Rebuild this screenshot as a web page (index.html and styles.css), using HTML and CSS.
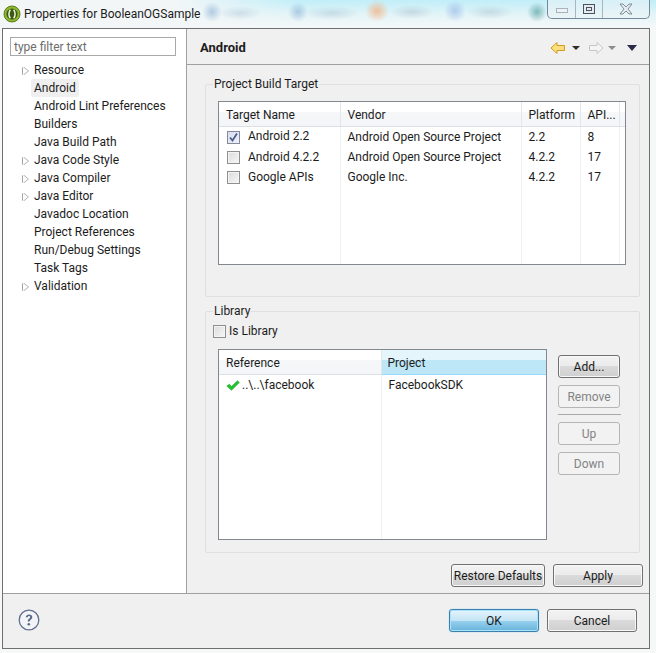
FILE: index.html
```html
<!DOCTYPE html>
<html lang="en">
<head>
  <meta charset="UTF-8" />
  <title>Properties for BooleanOGSample</title>
  <link rel="stylesheet" href="styles.css">
</head>
<body>
  <div class="titlebar">
    <svg class="app-icon" width="18" height="18" viewBox="0 0 18 18">
      <circle cx="9" cy="9" r="8" fill="#8fb92c" stroke="#5d7a1c"/>
      <circle cx="9" cy="9" r="5.6" fill="#3c5a17"/>
      <path d="M7.400 4.800C5.400 7 5.400 11 7.400 13.200M10.600 4.800C12.600 7 12.600 11 10.600 13.200" fill="none" stroke="#f2f7d8" stroke-width="1.500"/>
    </svg>
    <span class="title-text">Properties for BooleanOGSample</span>
    <div class="win-controls">
      <div class="win-btn win-min"><span class="min-glyph"></span></div>
      <div class="win-btn win-max"><span class="max-glyph"></span></div>
      <div class="win-btn win-close">
        <svg width="14" height="12" viewBox="0 0 14 12"><path d="M1 1h3l3 3 3-3h3L9 6l4 5h-3L7 8l-3 3H1l4-5z" fill="#e6ebef" stroke="#6a7680" stroke-width=".8"/></svg>
      </div>
    </div>
  </div>

  <div class="window">
    <div class="main">
      <div class="sidebar">
        <input class="filter" type="text" placeholder="type filter text">
        <ul class="tree">
          <li class="has-kids">Resource</li>
          <li><span class="selected">Android</span></li>
          <li>Android Lint Preferences</li>
          <li>Builders</li>
          <li>Java Build Path</li>
          <li class="has-kids">Java Code Style</li>
          <li class="has-kids">Java Compiler</li>
          <li class="has-kids">Java Editor</li>
          <li>Javadoc Location</li>
          <li>Project References</li>
          <li>Run/Debug Settings</li>
          <li>Task Tags</li>
          <li class="has-kids">Validation</li>
        </ul>
      </div>

      <div class="content">
        <div class="page-head">
          <h1>Android</h1>
          <div class="nav-icons">
            <svg width="16" height="14" viewBox="0 0 16 14"><path d="M1 7l6-5.500v3h7.500v5H7v3z" fill="#fbdf7f" stroke="#d49a1c"/></svg>
            <span class="drop drop-dark"></span>
            <svg class="nav-fwd" width="16" height="14" viewBox="0 0 16 14"><path d="M15 7L9 1.500v3H1.500v5H9v3z" fill="#f4f4f4" stroke="#c6c6c6"/></svg>
            <span class="drop drop-grey"></span>
            <span class="drop drop-menu"></span>
          </div>
        </div>

        <fieldset class="group group-target">
          <legend>Project Build Target</legend>
          <div class="table-box target-box">
            <table class="grid">
              <colgroup><col class="c-name"><col class="c-vendor"><col class="c-platform"><col class="c-api"><col></colgroup>
              <thead>
                <tr><th>Target Name</th><th>Vendor</th><th>Platform</th><th>API...</th><th></th></tr>
              </thead>
              <tbody>
                <tr><td><span class="check checked"><svg width="11" height="11" viewBox="0 0 11 11"><path d="M2 5.500l2.500 3L9 1.500" fill="none" stroke="#4a5f8c" stroke-width="1.800"/></svg></span>Android 2.2</td><td>Android Open Source Project</td><td>2.2</td><td>8</td><td></td></tr>
                <tr><td><span class="check"></span>Android 4.2.2</td><td>Android Open Source Project</td><td>4.2.2</td><td>17</td><td></td></tr>
                <tr><td><span class="check"></span>Google APIs</td><td>Google Inc.</td><td>4.2.2</td><td>17</td><td></td></tr>
                <tr class="filler"><td></td><td></td><td></td><td></td><td></td></tr>
              </tbody>
            </table>
          </div>
        </fieldset>

        <fieldset class="group group-library">
          <legend>Library</legend>
          <label class="is-library"><span class="check"></span>Is Library</label>
          <div class="library-row">
            <div class="table-box ref-box">
              <table class="grid">
                <colgroup><col class="c-ref"><col></colgroup>
                <thead>
                  <tr><th>Reference</th><th class="sorted">Project</th></tr>
                </thead>
                <tbody>
                  <tr><td><svg class="ok-mark" width="14" height="11" viewBox="0 0 14 11"><path d="M.8 6l2.700-1.800L5.500 6.500 11.500.8 13.300 2.500 5.500 10.300z" fill="#22c52e" stroke="#14a820" stroke-width=".6"/></svg>..\..\facebook</td><td>FacebookSDK</td></tr>
                  <tr class="filler"><td></td><td></td></tr>
                </tbody>
              </table>
            </div>
            <div class="side-buttons">
              <button class="btn">Add...</button>
              <button class="btn" disabled>Remove</button>
              <div class="side-sep"></div>
              <button class="btn" disabled>Up</button>
              <button class="btn" disabled>Down</button>
            </div>
          </div>
        </fieldset>

        <div class="page-actions">
          <button class="btn btn-restore">Restore Defaults</button>
          <button class="btn btn-apply">Apply</button>
        </div>
      </div>
    </div>

    <div class="footer">
      <svg class="help" width="22" height="22" viewBox="0 0 22 22">
        <circle cx="11" cy="11" r="9.800" fill="#f2f4f8" stroke="#5f6f8e" stroke-width="1.300"/>
        <path d="M7.800 8.300C8 6.400 9.400 5.600 11.100 5.600c1.900 0 3.200 1 3.200 2.600 0 2.300-2.600 2.300-2.600 4.200H9.800c0-2.700 2.300-2.800 2.300-4.200 0-.7-.4-1.100-1.100-1.100-.8 0-1.100.5-1.200 1.200z" fill="#5a6a88"/>
        <circle cx="10.800" cy="15.200" r="1.300" fill="#5a6a88"/>
      </svg>
      <div class="footer-buttons">
        <button class="btn btn-dialog btn-ok">OK</button>
        <button class="btn btn-dialog">Cancel</button>
      </div>
    </div>
  </div>
</body>
</html>
```

FILE: styles.css
```css
* { box-sizing: border-box; }
body {
  margin: 0;
  width: 656px;
  height: 653px;
  overflow: hidden;
  background: #f6f8f8;
  font-family: Roboto, "Liberation Sans", sans-serif;
  font-size: 12px;
  color: #1c1c1c;
}

/* title bar, with the blurred desktop showing through */
.titlebar {
  height: 28px;
  padding-left: 3px;
  display: flex;
  align-items: center;
  background:
    radial-gradient(ellipse 10px 10px at 212px 12px, rgba(120,160,205,.5), transparent),
    radial-gradient(ellipse 22px 7px at 240px 13px, rgba(170,195,215,.45), transparent),
    radial-gradient(ellipse 10px 10px at 298px 12px, rgba(120,160,205,.5), transparent),
    radial-gradient(ellipse 28px 7px at 332px 13px, rgba(170,195,215,.5), transparent),
    radial-gradient(ellipse 12px 11px at 377px 11px, rgba(245,175,125,.75), transparent),
    radial-gradient(ellipse 22px 7px at 412px 12px, rgba(170,190,205,.5), transparent),
    radial-gradient(ellipse 11px 11px at 455px 11px, rgba(140,170,225,.55), transparent),
    radial-gradient(ellipse 24px 7px at 490px 12px, rgba(170,195,210,.5), transparent),
    radial-gradient(ellipse 10px 10px at 537px 12px, rgba(95,165,165,.75), transparent),
    linear-gradient(to right, #f3f6f7 0, #f3f6f7 170px, rgba(243,246,247,0) 300px),
    linear-gradient(to bottom, #c0eef9 0, #e2f4f7 50%, #f6f8f8 100%);
  position: relative;
}
.app-icon { margin-right: 3px; }
.win-controls {
  position: absolute;
  top: 0;
  left: 547px;
  width: 103px;
  height: 19px;
  display: flex;
  border: 1px solid #76899a;
  border-top: none;
  border-radius: 0 0 5px 5px;
  background: rgba(235,242,246,.55);
}
.win-btn {
  display: flex;
  align-items: center;
  justify-content: center;
  border-right: 1px solid #a9b6c0;
}
.win-min { width: 28px; }
.win-max { width: 27px; }
.win-close { flex: 1; border-right: none; }
.min-glyph {
  width: 12px;
  height: 5px;
  margin-top: 3px;
  border: 1px solid #a8b4bd;
  background: #eef2f4;
}
.max-glyph {
  width: 12px;
  height: 10px;
  border: 1px solid #4a5560;
  background: #e6eaed;
  box-shadow: inset 0 0 0 2px #e6eaed, inset 0 0 0 3px #4a5560;
}

.window {
  width: 648px;
  height: 621px;
  margin-left: 2px;
  border: 1px solid #6f6f6f;
  background: #f0f0f0;
  display: flex;
  flex-direction: column;
}
.main {
  height: 564px;
  display: flex;
}

/* left tree */
.sidebar {
  width: 184px;
  background: #fff;
  border-right: 1px solid #a0a0a0;
  padding: 8px 0 0 7px;
}
.filter {
  display: block;
  width: 166px;
  height: 19px;
  padding: 0 3px;
  border: 1px solid #a9a9a9;
  font: inherit;
  color: #333;
}
.filter::placeholder { color: #6d6d6d; }
.tree {
  list-style: none;
  margin: 5px 0 0;
  padding: 0 0 0 24px;
}
.tree li {
  height: 18px;
  line-height: 18px;
  white-space: nowrap;
  position: relative;
}
.has-kids::before {
  content: "";
  position: absolute;
  left: -11px;
  top: 6px;
  border-left: 5px solid #fff;
  border-top: 4px solid transparent;
  border-bottom: 4px solid transparent;
  filter: drop-shadow(-1px 0 0 #a3a3a3) drop-shadow(1px 0 0 #a3a3a3);
}
.selected {
  display: inline-block;
  margin-left: -3px;
  padding: 0 3px;
  background: #efefef;
  border-radius: 2px;
}

/* right page */
.content {
  flex: 1;
  min-width: 0;
}
.page-head {
  height: 36px;
  border-bottom: 1px solid #a0a0a0;
  padding: 2px 12px 0 13px;
  display: flex;
  align-items: center;
  justify-content: space-between;
}
.page-head h1 {
  margin: 0;
  font-size: 13px;
  font-weight: 700;
}
.nav-icons {
  display: flex;
  align-items: center;
}
.drop {
  width: 0;
  height: 0;
  margin-left: 6px;
  border-left: 4px solid transparent;
  border-right: 4px solid transparent;
  border-top: 4px solid #2d2d2d;
}
.nav-fwd { margin-left: 8px; }
.drop-grey {
  margin-left: 4px;
  border-top-color: #8a8a8a;
}
.drop-menu {
  margin-left: 11px;
  border-left-width: 5px;
  border-right-width: 5px;
  border-top: 6px solid #2c2c4a;
}

.group {
  margin: 0 9px 0 18px;
  padding: 0 12px 0 12px;
  border: 1px solid #dfdfdf;
  border-radius: 2px;
  min-width: 0;
}
.group legend {
  padding: 0 1px;
  margin-left: -5px;
  line-height: 15px;
}
.group-target {
  margin-top: 12px;
  height: 220px;
  padding-top: 9px;
}
.group-library {
  margin-top: 7px;
  height: 249px;
}
.target-box {
  height: 164px;
  margin-right: 1px;
}

.table-box {
  border: 1px solid #828790;
  background: #fff;
}
.grid {
  width: 100%;
  height: 100%;
  table-layout: fixed;
  border-collapse: collapse;
}
.grid th {
  height: 24px;
  padding: 3px 0 0 7px;
  font-weight: 400;
  text-align: left;
  border-right: 1px solid #e4e6e8;
  border-bottom: 1px solid #dcdfe3;
  background: linear-gradient(to bottom, #fff 0, #fff 40%, #f5f7f9 41%, #f3f5f7 100%);
}
.grid th:last-child { border-right: none; }
.grid th.sorted {
  padding-left: 6px;
  background: linear-gradient(to bottom, #e4f5fc 0, #e4f5fc 40%, #bde6f6 41%, #bde6f6 100%);
  border-left: 1px solid #96d9f9;
  border-bottom-color: #96d9f9;
}
.grid td {
  height: 20.5px;
  padding: 0 0 0 7px;
  border-right: 1px solid #eef0f2;
  white-space: nowrap;
  overflow: hidden;
}
.grid td:last-child { border-right: none; }
.grid .filler td { height: auto; }
.c-name { width: 121px; }
.c-vendor { width: 181px; }
.c-platform { width: 59px; }
.c-api { width: 39px; }
.c-ref { width: 162px; }

.check {
  display: inline-flex;
  align-items: center;
  justify-content: center;
  vertical-align: -3px;
  width: 13px;
  height: 13px;
  margin: 0 8px 0 1px;
  border: 1px solid #8e8f8f;
  background: linear-gradient(135deg, #dcdcdc, #f6f6f6);
  box-shadow: inset 0 0 0 1px #f4f4f4;
}
.check.checked {
  background: linear-gradient(135deg, #d8deef, #eef1fa);
  border-color: #85899c;
  box-shadow: none;
}
.is-library {
  display: block;
  margin: 4px 0 0 -5px;
  height: 19px;
  line-height: 17px;
}
.is-library .check { margin: 0 3px 0 0; }

.library-row {
  display: flex;
  margin-top: 7px;
}
.ref-box {
  width: 329px;
  height: 191px;
}
.ok-mark {
  margin-right: 2px;
  vertical-align: -2px;
}
.side-buttons {
  margin: 6px 0 0 11px;
  width: 62px;
  display: flex;
  flex-direction: column;
  gap: 7px;
}
.side-sep {
  height: 1px;
  margin: -1px -1px 0 0;
  background: #a9a9a9;
}

.btn {
  height: 23px;
  padding: 0;
  border: 1px solid #707070;
  border-radius: 3px;
  font: inherit;
  color: #1c1c1c;
  background: linear-gradient(to bottom, #f3f3f3 0, #ebebeb 49%, #dadada 50%, #cfcfcf 100%);
  box-shadow: inset 0 0 0 1px #f8f8f8;
}
.btn:disabled {
  border-color: #b5b5b5;
  background: #f2f2f2;
  color: #838383;
  box-shadow: none;
}
.page-actions {
  display: flex;
  gap: 8px;
  margin: 11px 6px 0 264px;
}
.btn-restore { width: 94px; }
.btn-apply { width: 90px; }

.footer {
  flex: 1;
  border-top: 1px solid #a0a0a0;
  display: flex;
  align-items: center;
  justify-content: space-between;
  padding: 0 12px 0 15px;
}
.help { margin-top: -2px; }
.footer-buttons {
  display: flex;
  gap: 8px;
  margin-top: -1px;
}
.btn-dialog { width: 90px; }
.btn-ok {
  border: 1px solid #3c7fb1;
  background: linear-gradient(to bottom, #e5f4fc 0, #c4e5f6 50%, #98d1ef 51%, #68b3db 100%);
  box-shadow: inset 0 0 0 1px #a8e3f8, 0 0 1px #4cb2dd;
}
```
